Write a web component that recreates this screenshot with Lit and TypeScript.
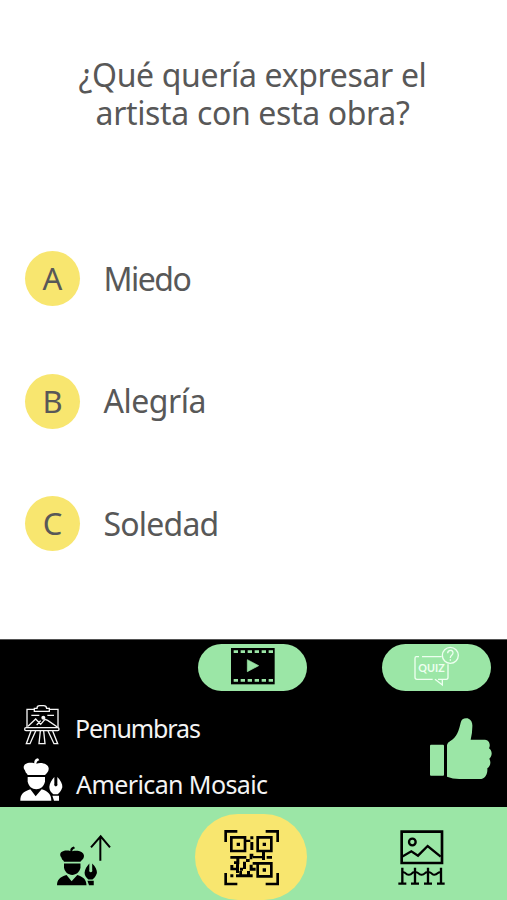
import { LitElement, html, css, svg } from "lit";
import { customElement, property } from "lit/decorators.js";

const artist = svg`
  <path d="M28 44C22 41 24 35 19 30C14 16 30 8 50 13C49 6 52 0 61 -2L65 4C59 6 57 9 56 14C74 9 92 16 93 28C94 38 86 43 82 48H30Z"/>
  <path d="M30 54H82V67C80 82 68 91 56 91C43 91 32 82 30 67Z"/>
  <path d="M8 125C8 107 16 98 38 91L54 112L72 91C92 97 101 107 101 125Z"/>
  <path d="M110 54V75A5 5 0 1 0 119 75V54C129 64 135 75 134 85C131 96 124 103 120 106H107C100 100 95 94 95 84C96 73 102 63 110 54Z"/>
  <path d="M104 110H124V125H109Z"/>`;

@customElement("answer-option")
class AnswerOption extends LitElement {
  @property() letter = "";
  @property() label = "";
  static styles = css`
    :host { display: flex; align-items: center; height: 56px; color: #585858; font: 32px/56px "Noto Sans", sans-serif; }
    .disc { width: 55px; height: 55px; line-height: 55px; border-radius: 50%; background: #f8e66f; text-align: center; margin-right: 23.5px; font-size: 31px; }
    .label { letter-spacing: var(--track, 0); }
  `;
  render() {
    return html`<div class="disc">${this.letter}</div><div class="label">${this.label}</div>`;
  }
}

@customElement("app-root")
class AppRoot extends LitElement {
  static styles = css`
    :host { display: flex; flex-direction: column; width: 507px; height: 900px; overflow: hidden; background: #fff; font-family: "Noto Sans", sans-serif; }
    svg { display: block; flex: none; }
    .question { height: 639px; box-sizing: border-box; padding-top: 56px; color: #585858; }
    h1 { margin: 0; font-size: 32px; line-height: 38px; font-weight: 400; text-align: center; height: 76px; white-space: nowrap; letter-spacing: -0.35px; padding-right: 2px; }
    .options { padding: 118.5px 0 0 25px; display: flex; flex-direction: column; gap: 66.5px; }
    .miedo { --track: -1.5px; }
    .alegria { --track: -0.5px; }
    .soledad { --track: -0.8px; }
    .work { height: 168px; box-sizing: border-box; background: #000; border-top: 1px solid #555; color: #f4f4f4; padding-top: 4px; }
    .tabs { display: flex; justify-content: space-between; padding: 0 16px 0 198px; }
    .pill { width: 109px; height: 47px; border-radius: 23.5px; background: #9be6a6; }
    .info { display: flex; justify-content: space-between; padding: 9px 11px 0 15px; }
    .row { display: flex; height: 56px; align-items: center; font-size: 25px; line-height: 56px; white-space: nowrap; }
    .row svg { margin: 0 14px 9px 0; }
    .row .beret { margin: 0 10px 9px 5px; }
    .t1 { letter-spacing: -1.1px; }
    .t2 { letter-spacing: -0.6px; }
    .like { margin-top: 16px; }
    nav { height: 93px; background: #9be6a6; display: flex; justify-content: space-between; }
    .artist { margin: 24px 0 0 53px; }
    .scan { width: 112px; height: 86px; margin: 7px 0 0 24px; border-radius: 45px; background: #f8e66f; }
    .gallery { margin: 20px 60px 0 30px; }
  `;
  render() {
    return html`
      <section class="question">
        <h1>¿Qué quería expresar el<br>artista con esta obra?</h1>
        <div class="options">
          <answer-option class="miedo" letter="A" label="Miedo"></answer-option>
          <answer-option class="alegria" letter="B" label="Alegría"></answer-option>
          <answer-option class="soledad" letter="C" label="Soledad"></answer-option>
        </div>
      </section>
      <section class="work">
        <div class="tabs">
          <div class="pill">
            <svg width="109" height="47" viewBox="24 27 327 141">
              <rect x="123" y="39" width="131" height="109"/>
              <path d="M172 74V110L206 92Z" fill="#9be6a6" stroke="#9be6a6" stroke-width="2" stroke-linejoin="round"/>
              <path d="M131 50H249M131 136H249" stroke="#9be6a6" stroke-width="8" stroke-dasharray="13 8"/>
            </svg>
          </div>
          <div class="pill">
            <svg width="109" height="47" viewBox="22 27 327 141" fill="none" stroke="#edfff0" stroke-width="4">
              <path d="M201 65H142M133 65H125Q121 65 121 70V127Q121 133 127 133H174M181 133L203 150V133H215Q220 133 220 127V88M213 133H190"/>
              <circle cx="227" cy="61" r="24"/>
              <path d="M219 55C219 43 236 43 235 54C234 62 227 60 227 69M227 73V77"/>
              <text x="131" y="112" textLength="79" lengthAdjust="spacingAndGlyphs" font-family="Lato, sans-serif" font-size="34" font-weight="700" fill="#edfff0" stroke="none">QUIZ</text>
            </svg>
          </div>
        </div>
        <div class="info">
          <div>
            <div class="row">
              <svg width="46" height="44" viewBox="0 17 138 132" fill="none" stroke="#f5f5f5" stroke-width="4">
                <path d="M58 39H36V94M104 39H129V94"/>
                <path d="M58 45V36H66Q66 28 74 28H86Q94 28 95 36H103V45Z"/>
                <path d="M39 90L62 68L77 84L90 69L98 72L127 92M65 86L77 73M49 57H73M97 57H117"/>
                <circle cx="85" cy="64" r="6" fill="#f5f5f5" stroke="none"/>
                <rect x="29" y="94" width="103" height="9" rx="4"/>
                <path d="M48 104L34 142H45L62 104M113 104L128 142H117L99 104M76 104L72 142H90L86 104"/>
              </svg><span class="t1">Penumbras</span>
            </div>
            <div class="row">
              <svg class="beret" width="46" height="44" viewBox="7 -3 138 132" fill="#fff">${artist}</svg><span class="t2">American Mosaic</span>
            </div>
          </div>
          <svg class="like" width="67" height="66" viewBox="27 18 201 198" fill="#9be6a6">
            <rect x="30" y="104" width="42" height="93" rx="3"/>
            <path d="M81 105Q82 98 91 93C110 82 117 61 122 38C124 27 133 23 143 25C154 29 158 39 157 50Q157 69 152 89H195C207 90 213 103 207 115C217 122 218 137 208 146C214 157 211 169 202 175C203 191 198 204 184 207H118Q98 207 81 200Z"/>
          </svg>
        </div>
      </section>
      <nav>
        <svg class="artist" width="58" height="58" viewBox="24 18 174 174">
          <g transform="translate(28.5 66) scale(.95 .92)">${artist}</g>
          <path d="M166 107V35M138 67L167 34L195 67" fill="none" stroke="#000" stroke-width="6"/>
        </svg>
        <div class="scan">
          <svg width="112" height="86" viewBox="14 27 336 258">
            <path d="M106 111V79H141M226 79H262V111M106 204V237H141M226 237H262V204" fill="none" stroke="#000" stroke-width="8"/>
            <path d="M123 97H164V138H123ZM202 97H243V138H202ZM202 175H243V214H202Z" fill="none" stroke="#000" stroke-width="8"/>
            <path d="M139 113h10v10h-10zM217 113h10v10h-10zM217 190h10v10h-10zM180 94h9v9h-9zM167 104h13v7h-13zM180 111h9v24h-9zM120 153h48v8h-48zM178 146h11v9h-11zM187 153h28v7h-28zM215 140h9v25h-9zM229 153h16v8h-16zM167 162h11v9h-11zM178 155h8v8h-8zM138 161h9v17h-9zM131 169h16v8h-16zM120 180h9v16h-9zM129 188h8v8h-8zM137 178h9v26h-9zM158 170h9v22h-9zM149 188h9v9h-9zM120 208h9v9h-9zM137 208h50v9h-50zM170 198h9v12h-9zM178 179h9v18h-9zM187 171h15v8h-15zM187 188h9v9h-9zM147 198h8v12h-8z"/>
          </svg>
        </div>
        <svg class="gallery" width="51" height="62" viewBox="17 15 153 186" fill="none" stroke="#000" stroke-width="7">
          <path d="M34 29H155V123H34Z" stroke-width="8"/>
          <circle cx="66" cy="60" r="10"/>
          <path d="M35 104L63 88L83 101L112 72L151 104"/>
          <path d="M36 137V185M74 137V185M113 137V185M152 137V185M24 185H48M62 185H86M101 185H125M140 185H163" stroke-width="7"/>
          <path d="M36 151C49 148 43 159 56 158C68 158 62 149 74 151C87 148 82 159 94 158C106 158 101 149 113 151C126 148 121 159 132 158C144 158 140 149 152 151" stroke-width="6"/>
        </svg>
      </nav>`;
  }
}
